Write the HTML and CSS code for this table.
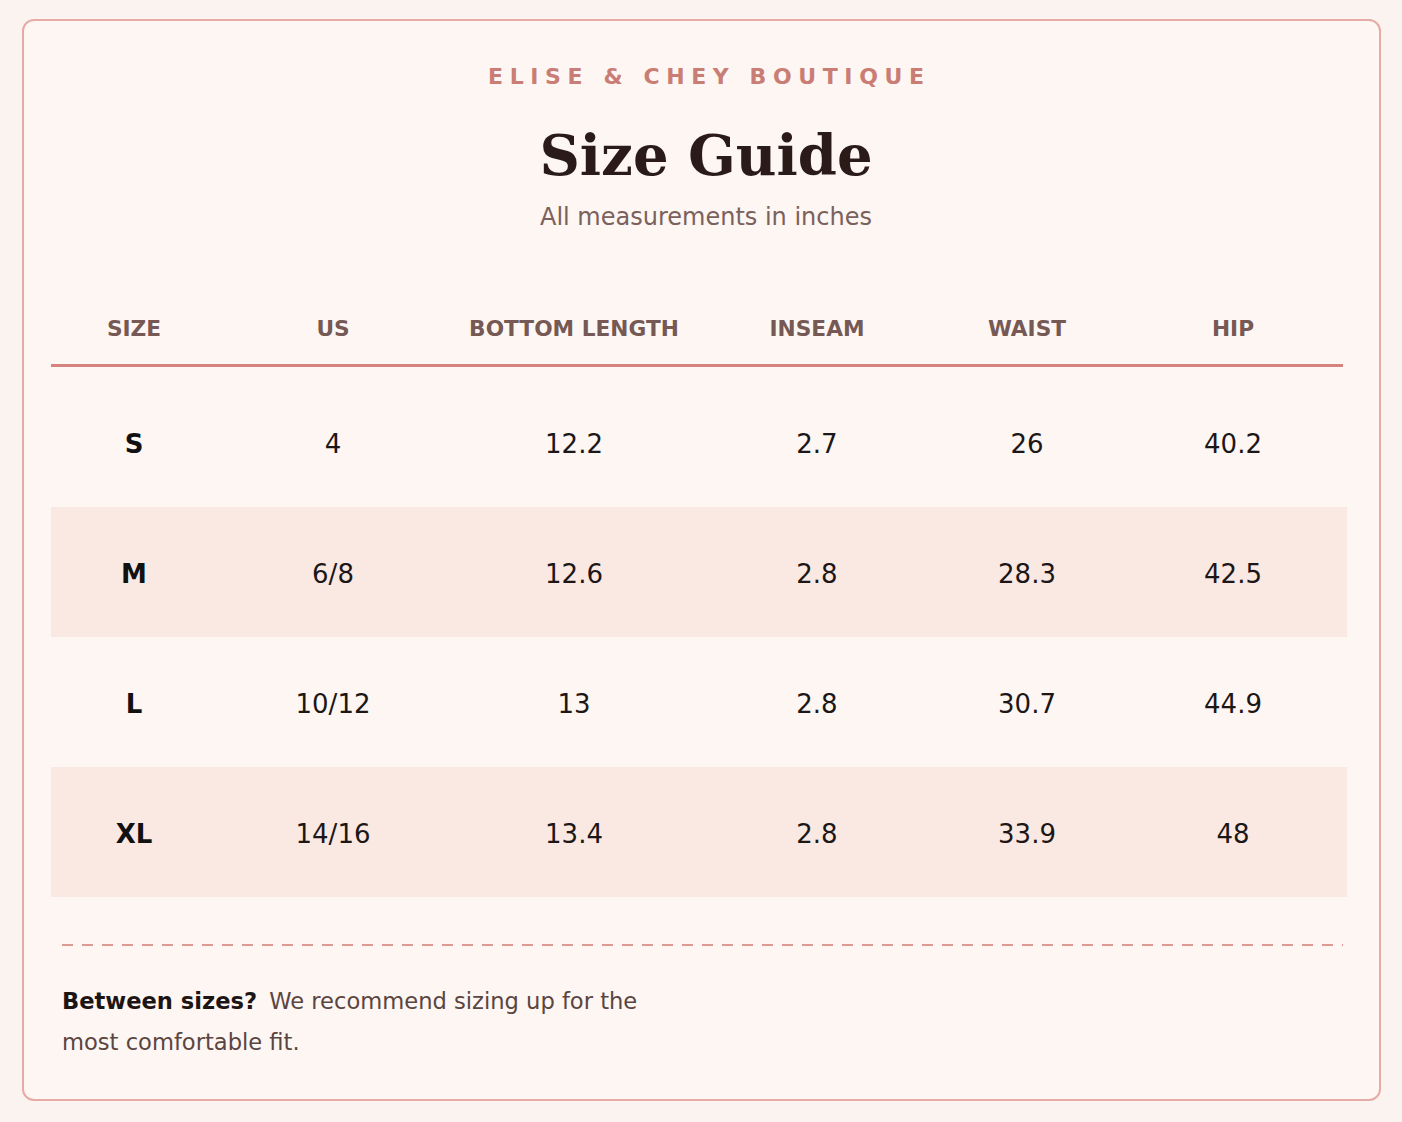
FILE: index.html
```html
<!DOCTYPE html>
<html lang="en">
<head>
<meta charset="utf-8">
<title>Size Guide</title>
<link rel="stylesheet" href="styles.css">
</head>
<body>
<main class="card">
  <header class="head">
    <div class="brand">ELISE &amp; CHEY BOUTIQUE</div>
    <h1 class="title">Size Guide</h1>
    <p class="subtitle">All measurements in inches</p>
  </header>

  <section class="table">
    <div class="row row-head">
      <div class="cell">SIZE</div>
      <div class="cell">US</div>
      <div class="cell">BOTTOM LENGTH</div>
      <div class="cell">INSEAM</div>
      <div class="cell">WAIST</div>
      <div class="cell">HIP</div>
    </div>
    <div class="row">
      <div class="cell size">S</div>
      <div class="cell">4</div>
      <div class="cell">12.2</div>
      <div class="cell">2.7</div>
      <div class="cell">26</div>
      <div class="cell">40.2</div>
    </div>
    <div class="row alt">
      <div class="cell size">M</div>
      <div class="cell">6/8</div>
      <div class="cell">12.6</div>
      <div class="cell">2.8</div>
      <div class="cell">28.3</div>
      <div class="cell">42.5</div>
    </div>
    <div class="row">
      <div class="cell size">L</div>
      <div class="cell">10/12</div>
      <div class="cell">13</div>
      <div class="cell">2.8</div>
      <div class="cell">30.7</div>
      <div class="cell">44.9</div>
    </div>
    <div class="row alt">
      <div class="cell size">XL</div>
      <div class="cell">14/16</div>
      <div class="cell">13.4</div>
      <div class="cell">2.8</div>
      <div class="cell">33.9</div>
      <div class="cell">48</div>
    </div>
  </section>

  <footer class="foot">
    <div class="dash"></div>
    <p class="note"><strong>Between sizes?</strong> We recommend sizing up for the most comfortable fit.</p>
  </footer>
</main>
</body>
</html>
```

FILE: styles.css
```css
* { box-sizing: border-box; }

html, body {
  margin: 0;
  background: #fbf3f0;
}

body {
  padding: 19px 21px 21px 22px;
  font-family: "DejaVu Sans", "Liberation Sans", sans-serif;
  color: #1f1918;
}

.card {
  height: 1082px;
  background: #fdf6f3;
  border: 2px solid #e4aca5;
  border-radius: 12px;
  padding: 43px 32px 0 27px;
  display: flex;
  flex-direction: column;
}

.head {
  display: flex;
  flex-direction: column;
  align-items: center;
  padding-left: 14px;
}

.brand {
  font-size: 22px;
  line-height: 26px;
  font-weight: bold;
  letter-spacing: 0.3em;
  margin-right: -0.3em;
  color: #c97d74;
}

.title {
  margin: 29px 0 0;
  font-family: "DejaVu Serif", "Liberation Serif", serif;
  font-weight: bold;
  font-size: 56px;
  line-height: 72px;
  color: #2a1b18;
}

.subtitle {
  margin: 13px 0 0;
  font-size: 24px;
  line-height: 26px;
  color: #7a615c;
}

.table {
  margin-top: 65px;
  display: flex;
  flex-direction: column;
}

.row {
  display: grid;
  grid-template-columns: 166px 232px 250px 236px 184px 228px;
  height: 130px;
}

.row.alt {
  background: #fae8e3;
}

.row-head {
  height: auto;
  padding: 22px 0 23px;
  border-bottom: 3px solid #d4847c;
  margin-right: 4px;
  margin-bottom: 10px;
}

.cell {
  display: flex;
  align-items: center;
  justify-content: center;
  padding-top: 3px;
  font-size: 26px;
  line-height: 30px;
  color: #1c1716;
}

.row-head .cell {
  padding-top: 0;
  font-size: 21.7px;
  line-height: 24px;
  font-weight: bold;
  color: #765954;
}

.cell.size {
  font-weight: bold;
  color: #111;
}

.foot {
  margin: 47px 4px 0 11px;
}

.dash {
  height: 2px;
  background: repeating-linear-gradient(to right, #dc9a93 0 11px, transparent 11px 20px);
}

.note {
  margin: 35px 0 0;
  max-width: 600px;
  font-size: 22.6px;
  line-height: 41px;
  color: #5a4541;
}

.note strong {
  color: #1d1513;
  margin-right: 5px;
}
```
